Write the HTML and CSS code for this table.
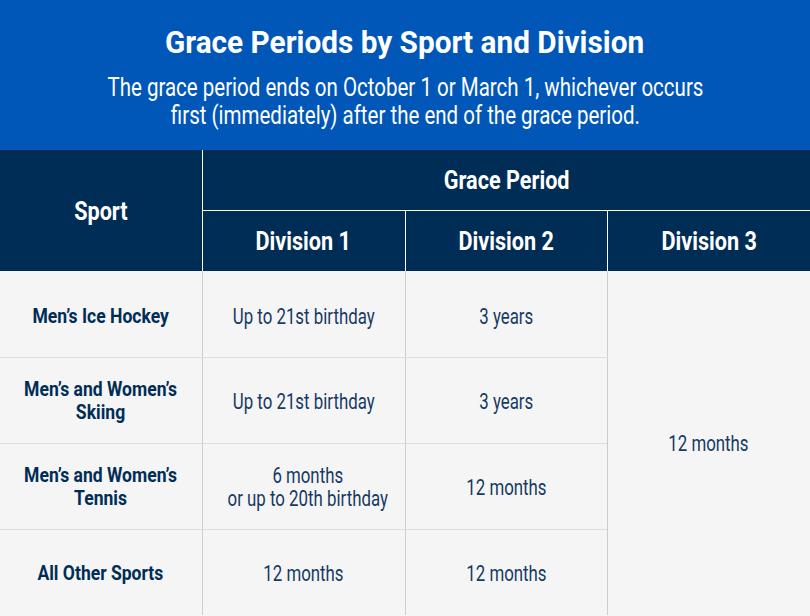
FILE: index.html
```html
<!DOCTYPE html>
<html>
<head>
<meta charset="utf-8">
<link rel="stylesheet" href="styles.css">
</head>
<body>
<div class="page">
  <header class="intro">
    <h1 class="title"><span class="t">Grace Periods by Sport and Division</span></h1>
    <p class="subtitle"><span class="t">The grace period ends on October 1 or March 1, whichever occurs<br>first (immediately) after the end of the grace period.</span></p>
  </header>
  <table class="grid">
    <colgroup>
      <col class="c1"><col class="c2"><col class="c3"><col class="c4">
    </colgroup>
    <thead>
      <tr class="h1row">
        <th rowspan="2" class="sport-h"><span class="t">Sport</span></th>
        <th colspan="3" class="gp"><span class="t">Grace Period</span></th>
      </tr>
      <tr class="h2row">
        <th class="d"><span class="t">Division 1</span></th>
        <th class="d"><span class="t">Division 2</span></th>
        <th class="d last"><span class="t">Division 3</span></th>
      </tr>
    </thead>
    <tbody>
      <tr class="firstrow">
        <td class="sport"><span class="t">Men’s Ice Hockey</span></td>
        <td><span class="t">Up to 21st birthday</span></td>
        <td><span class="t">3 years</span></td>
        <td rowspan="4" class="d3"><span class="t">12 months</span></td>
      </tr>
      <tr>
        <td class="sport"><span class="t">Men’s and Women’s<br>Skiing</span></td>
        <td><span class="t">Up to 21st birthday</span></td>
        <td><span class="t">3 years</span></td>
      </tr>
      <tr>
        <td class="sport"><span class="t">Men’s and Women’s<br>Tennis</span></td>
        <td><span class="t">6 months<br>or up to 20th birthday</span></td>
        <td><span class="t">12 months</span></td>
      </tr>
      <tr class="lastrow">
        <td class="sport"><span class="t">All Other Sports</span></td>
        <td><span class="t">12 months</span></td>
        <td><span class="t">12 months</span></td>
      </tr>
    </tbody>
  </table>
</div>
</body>
</html>
```

FILE: styles.css
```css
html, body {
  margin: 0;
  padding: 0;
  background: #f5f5f5;
}
.page {
  width: 810px;
  height: 616px;
  overflow: hidden;
  font-family: Roboto, "Liberation Sans", sans-serif;
  --sx: 0.8;
}
.t {
  display: inline-block;
  transform: scaleX(var(--sx));
  transform-origin: center center;
  white-space: nowrap;
}
.intro {
  background: #0057b8;
  color: #ffffff;
  height: 150px;
  box-sizing: border-box;
  padding-top: 24px;
  text-align: center;
}
.title {
  margin: 0;
  font-size: 31px;
  font-weight: 700;
  line-height: 38px;
  --sx: 0.96;
}
.subtitle {
  margin: 12px 0 0 0;
  font-size: 25px;
  line-height: 28px;
  font-weight: 400;
  --sx: 0.82;
}
.grid {
  width: 810px;
  border-collapse: collapse;
  table-layout: fixed;
}
.c1 { width: 202px; }
.c2 { width: 203px; }
.c3 { width: 202px; }
.c4 { width: 203px; }
thead th {
  background: #002d56;
  color: #ffffff;
  font-size: 25px;
  font-weight: 700;
  text-align: center;
  padding: 0;
  --sx: 0.865;
}
.h1row th.gp {
  height: 60px;
  border-bottom: 1px solid #ffffff;
  border-left: 1px solid #ffffff;
}
.sport-h {
  border-right: 1px solid #ffffff;
  padding-top: 2px;
}
.h2row th {
  height: 60px;
}
.h2row th.d {
  border-left: 1px solid #ffffff;
}
tbody td {
  height: 84px;
  padding: 1px 0 0 0;
  text-align: center;
  vertical-align: middle;
  color: #163a63;
  font-size: 22px;
  line-height: 23px;
  border-bottom: 1px solid #dddddd;
  border-left: 1px solid #cccccc;
  --sx: 0.765;
}
.firstrow td {
  padding-top: 4px;
  height: 82px;
}
tbody td.sport {
  font-size: 21px;
  font-weight: 700;
  color: #002d56;
  border-left: none;
  --sx: 0.835;
}
tbody td.d3 {
  border-bottom: none;
  padding-top: 0;
}
.lastrow td {
  border-bottom: none;
}
```
